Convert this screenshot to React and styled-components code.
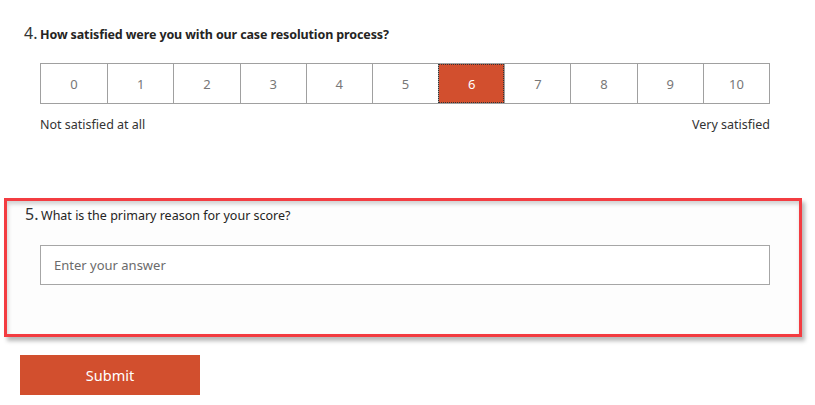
import React, { useState } from 'react';
import styled, { createGlobalStyle } from 'styled-components';

const GlobalStyle = createGlobalStyle`
  body {
    margin: 0;
    background: #ffffff;
    font-family: "Noto Sans", "Open Sans", Arial, sans-serif;
  }
`;

const Page = styled.div`
  width: 815px;
  height: 405px;
  overflow: hidden;
  background: #ffffff;
`;

const Question = styled.section`
  padding: 22px 0 0 24px;
`;

const Title = styled.div`
  display: flex;
  align-items: baseline;
  color: #252423;
  height: 26px;
`;

const Num = styled.span`
  font-size: 16px;
  width: 16px;
  color: #333;
`;

const Text = styled.span`
  font-size: 12.5px;
  font-weight: ${(p) => (p.bold ? 700 : 400)};
  letter-spacing: ${(p) => (p.bold ? '-0.12px' : '0')};
`;

const Body = styled.div`
  padding-left: 16px;
  width: 730px;
`;

const Scale = styled.div`
  display: grid;
  grid-template-columns: repeat(11, 1fr);
  margin-top: 15px;
  height: 41px;
  border: 1px solid #a0a0a0;
  box-sizing: border-box;
`;

const Cell = styled.div`
  display: flex;
  align-items: center;
  justify-content: center;
  font-size: 13px;
  color: ${(p) => (p.active ? '#ffffff' : '#777777')};
  background: ${(p) => (p.active ? '#d24f2e' : '#ffffff')};
  border-left: ${(p) => (p.first ? 'none' : '1px solid #a0a0a0')};
  outline: ${(p) => (p.active ? '1px dotted #333' : 'none')};
  outline-offset: -1px;
  cursor: pointer;
`;

const Labels = styled.div`
  display: flex;
  justify-content: space-between;
  margin-top: 12px;
  font-size: 12.5px;
  color: #333333;
`;

const Highlight = styled.section`
  margin: 65px 0 0 4px;
  width: 798px;
  height: 139px;
  box-sizing: border-box;
  border: 3px solid #f33c41;
  padding: 2px 0 0 18px;
  box-shadow: 3px 4px 4px rgba(0, 0, 0, 0.28), inset 1px 3px 4px rgba(0, 0, 0, 0.18);
  background: #fdfdfd;
`;

const Input = styled.input`
  display: block;
  margin: 16px 0 0 15px;
  width: 730px;
  height: 40px;
  box-sizing: border-box;
  border: 1px solid #a6a6a6;
  padding: 0 13px;
  font-family: inherit;
  font-size: 13px;
  color: #333;
  background: #fff;
  outline: none;
  &::placeholder {
    color: #6b6b6b;
  }
`;

const Submit = styled.button`
  display: block;
  margin: 18px 0 0 20px;
  width: 180px;
  height: 40px;
  border: none;
  background: #d24f2e;
  color: #ffffff;
  font-family: inherit;
  font-size: 14.5px;
  cursor: pointer;
`;

export default function App() {
  const [score, setScore] = useState(6);
  const values = Array.from({ length: 11 }, (_, i) => i);
  return (
    <Page>
      <GlobalStyle />
      <Question>
        <Title>
          <Num>4.</Num>
          <Text bold>How satisfied were you with our case resolution process?</Text>
        </Title>
        <Body>
          <Scale>
            {values.map((v) => (
              <Cell key={v} first={v === 0} active={v === score} onClick={() => setScore(v)}>
                {v}
              </Cell>
            ))}
          </Scale>
          <Labels>
            <span>Not satisfied at all</span>
            <span>Very satisfied</span>
          </Labels>
        </Body>
      </Question>
      <Highlight>
        <Title>
          <Num>5.</Num>
          <Text>What is the primary reason for your score?</Text>
        </Title>
        <Input placeholder="Enter your answer" />
      </Highlight>
      <Submit>Submit</Submit>
    </Page>
  );
}
